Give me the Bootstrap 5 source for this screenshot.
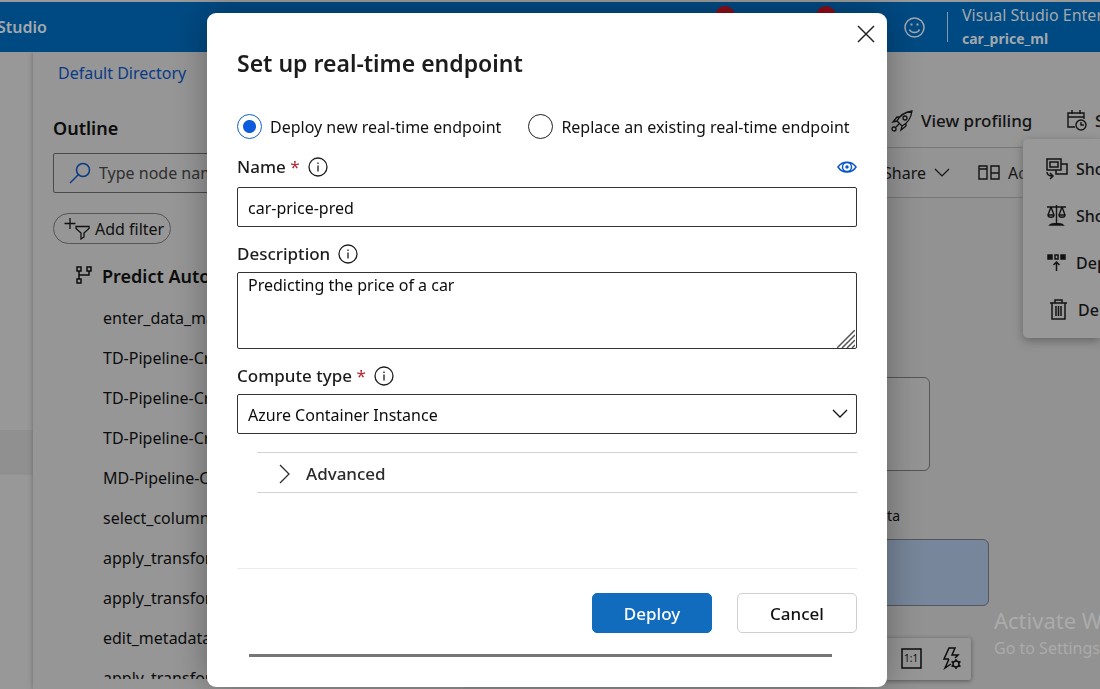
<!DOCTYPE html>
<html lang="en">
<head>
<meta charset="utf-8">
<meta name="viewport" content="width=device-width, initial-scale=1">
<title>Studio - Set up real-time endpoint</title>
<link href="https://cdn.jsdelivr.net/npm/bootstrap@5.3.0/dist/css/bootstrap.min.css" rel="stylesheet">
<style>
body{font-family:"Noto Sans","Open Sans",sans-serif;font-size:16px;line-height:24px;color:#0c0c0c;background:#929292;height:100vh;overflow:hidden}
svg{display:block;fill:none;stroke:currentColor;flex-shrink:0}
.topbar{height:52px;background:#004a83;border-top:2px solid #999;color:#a3a8ad}
.topbar .brand{font-size:16px;font-weight:600;margin-left:-3px}
.topbar .account{width:212px}
.account-box{width:152px;padding-left:14px}
.account-box>div{line-height:24px}
.account-box .space-name{font-size:14px;font-weight:700}
.vline{width:1px;height:30px;background:#7f99ae}
.dots{gap:81px;margin-right:52px}
.dot{width:20px;height:20px;background:#900d18}
.rail{width:33px;background:#989898}
.rail-top{height:378px}
.rail-mark{height:45px;background:#909090}
.outline{width:430px;background:#969696;box-shadow:0 0 5px #6a6a6a;padding:9px 20px 10px 20px}
.outline a{color:#0a3a86;margin-left:5px;font-size:16px}
.outline h2{font-size:18px;line-height:24px;font-weight:600;margin:31px 0 13px}
.search{height:40px;border:1px solid #4a4a4a;border-radius:2px;padding-left:15px}
.search input{background:transparent;color:#2f2f2f;font-size:16px;min-width:0;margin-left:6px}
.search input::placeholder{color:#2f2f2f}
.pill{height:31px;width:118px;border:1px solid #555;border-radius:16px;background:transparent;font-size:16px;color:#101010;margin-top:20px}
.tree{font-size:16px;margin:9px 0 0}
.tree li{height:40px;line-height:40px;padding-left:50px}
.tree li.root{font-size:18px;font-weight:600;padding-left:21px;height:45px}
.work{background:#929292;min-width:0}
.tools{background:#969696;border-bottom:1px solid #777;height:96px;padding-top:42px}
.tools2{background:#949494;border-bottom:1px solid #777;height:50px}
.toolbtn{background:none;border:0;padding:0;white-space:nowrap;color:#131313}
.tools .toolbtn{font-size:17px;font-weight:500}
.group1{width:209px}.group2{width:217px}
.clip-s{width:5px}
.flyout{top:139px;right:0;width:77px;height:199px;background:#989898;border-radius:5px 0 0 5px;box-shadow:0 3px 10px #666;z-index:3;padding:6px 0 0 23px}
.flyout .toolbtn{height:47px;font-weight:500}
.node{border:1px solid #55555a;border-radius:6px}
.n1{right:170px;top:179px;width:300px;height:94px;background:#949494}
.n2{right:111px;top:341px;width:300px;height:67px;background:#77869a}
.cap{right:200px;top:306px;font-size:14px}
.zoombar{right:129px;top:440px;height:42px;width:300px;background:#969696;box-shadow:0 1px 4px #555;border-radius:2px;padding-right:9px;padding-bottom:2px}
.mark-os{right:0;width:106px;bottom:29px;color:#ababab;white-space:nowrap;z-index:4}
.mark-os div:first-child{font-size:22px;line-height:32px}
.modal{padding:13px 6px 0 0;--bs-modal-margin:0}
.modal-dialog{max-width:680px;margin:0 auto}
.modal-content{height:calc(100vh - 15px);min-height:640px;border:0;border-radius:9px;padding:0 30px;box-shadow:0 0 34px rgba(0,0,0,.32);color:#111}
.modal h1{font-size:23px;line-height:32px;font-weight:600;color:#1c1c1c;margin:34px 0 0}
.close-x{right:11px;top:11px;width:20px;height:20px;background:none;border:0;padding:0;color:#222}
.choices{margin-top:34px;height:27px;gap:27px}
.choices .form-check-input{width:25px;height:25px;margin:0 8px 0 0;border-color:#222;float:none}
.choices .form-check-input:checked{border-color:#1160c8;background:#fff radial-gradient(circle,#0b5bdc 6px,#fff 7px)}
.choices label{white-space:nowrap}
.lab{height:24px;color:#1c1c1c;font-size:17px;font-weight:500;margin-top:15px}
.star{color:#b3202c;font-weight:400}
.modal .form-control,.modal .form-select{border:1px solid #333;border-radius:2px;font-size:16px;line-height:24px;padding:8px 10px 6px;color:#0c0c0c;background-image:none;height:40px}
.modal textarea.form-control{height:77px;padding-top:0;resize:none;display:block}
.fieldbox{margin-top:6px}
.grip{right:2px;bottom:1px;color:#555}
.chev{right:9px;top:13px;pointer-events:none}
.adv{margin:18px 0 0 20px;border:solid #d2d2d2;border-width:1px 0;height:41px;background:none;padding:2px 20px 0;font-size:17px;font-weight:500;color:#2b2b2b}
.adv svg{margin-right:13px}
.foot{margin-top:75px;border-top:1px solid #ebebeb;padding-top:24px;gap:25px}
.foot .btn{width:120px;height:40px;border-radius:5px;font-weight:500;font-size:17px;padding:2px 0 0}
.go{background:#116cbe;color:#fff;border-color:#116cbe}
.no{background:#fff;border-color:#cfcfcf;color:#111}
.scrollbar-x{height:3px;background:#767676;margin:21px 25px 0 12px}
</style>
</head>
<body class="d-flex flex-column">
<header class="topbar d-flex align-items-center flex-shrink-0 overflow-hidden">
  <span class="brand flex-grow-1">Studio</span>
  <div class="dots d-flex align-self-start pt-1"><span class="dot rounded-circle"></span><span class="dot rounded-circle"></span></div>
  <div class="account d-flex align-items-center flex-shrink-0 overflow-hidden h-100">
    <svg class="ms-3" width="21" height="21" viewBox="0 0 21 21" stroke-width="1.5"><circle cx="10.5" cy="10.5" r="9.500"/><path d="M5.500 12.500c1.500 4 8.500 4 10 0"/><path d="M7.500 6.500v2M13.500 6.500v2" stroke-width="2"/></svg>
    <div class="vline ms-auto"></div>
    <div class="account-box text-nowrap"><div>Visual Studio Enterprise</div><div class="space-name">car_price_ml</div></div>
  </div>
</header>
<div class="d-flex flex-grow-1 overflow-hidden">
  <nav class="rail flex-shrink-0"><div class="rail-top"></div><div class="rail-mark"></div></nav>
  <aside class="outline flex-shrink-0 d-flex flex-column">
    <div><a href="#" class="text-decoration-none">Default Directory</a></div>
    <h2>Outline</h2>
    <div class="search d-flex align-items-center flex-shrink-0">
      <svg width="22" height="22" viewBox="0 0 22 22" stroke-width="1.500" color="#0a3a86"><circle cx="14" cy="8" r="6.500"/><path d="M9.500 12.500L1 21"/></svg>
      <input class="border-0 flex-grow-1" type="text" placeholder="Type node name" aria-label="Type node name">
    </div>
    <button class="pill d-flex align-items-center ps-2 pe-0 flex-shrink-0 text-nowrap"><svg width="29" height="22" viewBox="0 0 29 22" stroke-width="1.300"><path d="M2.500 5.500h11M8 0v11M14 8.500h13v2L22 15v4l-3 2v-6l-5-4.500z"/></svg><span class="ms-1">Add filter</span></button>
    <ul class="tree list-unstyled flex-grow-1 overflow-hidden">
      <li class="root d-flex align-items-center text-nowrap"><svg class="me-2" width="20" height="20" viewBox="0 0 20 20" stroke-width="1.500"><path d="M3 1h4v4H3zM13 1h4v4h-4zM3 13h4v4H3zM5 5v8M15 5v4H5"/></svg>Predict Automobile</li>
      <li>enter_data_manually</li><li>TD-Pipeline-Created</li><li>TD-Pipeline-Created</li><li>TD-Pipeline-Created</li><li>MD-Pipeline-Created</li><li>select_columns</li><li>apply_transformation</li><li>apply_transformation</li><li>edit_metadata</li><li>apply_transformation</li>
    </ul>
  </aside>
  <main class="work flex-grow-1 d-flex flex-column">
    <div class="tools flex-shrink-0 d-flex justify-content-end">
      <div class="group1 d-flex align-items-center overflow-hidden">
        <button class="toolbtn d-flex align-items-center"><svg class="me-2" width="22" height="22" viewBox="0 0 22 22" stroke-width="1.300"><path d="M6 11C9 5 14 2 21 1c-1 7-4 12-10 15zM9 7H6l-4 5 4-1M15 13v3l-5 4 1-4M6 11l5 5"/><circle cx="14" cy="8" r="2"/><circle cx="3" cy="19" r="2"/><path d="M5 17l3-3"/></svg>View profiling</button>
        <button class="toolbtn d-flex align-items-center ms-auto"><svg class="me-2" width="20" height="21" viewBox="0 0 20 21" stroke-width="1.400"><path d="M8 17H1V3h16v6M1 7h16M5 0v4M13 0v4"/><circle cx="14" cy="15" r="5"/><path d="M14 12v3h3"/></svg><span class="clip-s overflow-hidden">Schedule</span></button>
      </div>
    </div>
    <div class="tools2 flex-shrink-0 d-flex justify-content-end">
      <div class="group2 d-flex align-items-center overflow-hidden">
        <button class="toolbtn d-flex align-items-center">Share<svg class="ms-2" width="16" height="9" viewBox="0 0 16 9" stroke-width="1.200"><path d="M1 1l7 7 7-7"/></svg></button>
        <button class="toolbtn d-flex align-items-center ms-4"><svg class="mx-1" width="22" height="15" viewBox="0 0 22 15" stroke-width="1.400"><path d="M1 1h8v13H1zM1 4h8M13 1h8v13h-8zM13 8h8"/></svg><span class="ms-1">Add</span></button>
      </div>
    </div>
    <section class="position-relative flex-grow-1 overflow-hidden">
      <div class="node n1 position-absolute"></div>
      <div class="cap position-absolute">data</div>
      <div class="node n2 position-absolute"></div>
      <div class="zoombar position-absolute d-flex justify-content-end align-items-center gap-3">
        <svg class="me-1" width="21" height="21" viewBox="0 0 21 21" stroke-width="1.500"><path d="M1 1h19v19H1z"/><text x="3" y="14" font-size="10" fill="currentColor" stroke="none">1:1</text></svg>
        <svg width="20" height="23" viewBox="0 0 20 23" stroke-width="1.500"><path d="M7 12H2L7 1h6l-3 7h6l-3 3M7 12l-4 9 6-4"/><circle cx="14" cy="17" r="3"/><path d="M14 12v2M14 20v2M9.500 14.500l2 1M16.500 18.500l2 1M9.500 19.500l2-1M16.500 15.500l2-1"/></svg>
      </div>
    </section>
  </main>
</div>
<div class="flyout position-absolute overflow-hidden">
  <button class="toolbtn d-flex align-items-center"><svg class="me-2" width="22" height="22" viewBox="0 0 22 22" stroke-width="1.500"><path d="M1 1h14v11H1zM4 4h8v5H4zM15 6h6v10H10v-4M1 14c0 3 2 4 6 4M4 15l3 3-3 3"/></svg>Show</button>
  <button class="toolbtn d-flex align-items-center"><svg class="me-2" width="22" height="22" viewBox="0 0 22 22" stroke-width="1.400"><path d="M1 2h19M10.500 0v18M4 20c2-2 11-2 13 0zM5 2L2 10M5 2l3 8M16 2l-3 8M16 2l3 8M2 10c0 3 6 3 6 0zM13 10c0 3 6 3 6 0z"/></svg>Show</button>
  <button class="toolbtn d-flex align-items-center"><svg class="me-2" width="22" height="20" viewBox="0 0 22 20" stroke-width="1.500"><path d="M2 2h4v4H2zM15 2h4v4h-4z" fill="currentColor"/><path d="M9 2h3v4H9zM10.500 18V9M7.500 12l3-3 3 3"/></svg>Deploy</button>
  <button class="toolbtn d-flex align-items-center"><svg class="me-2" width="24" height="22" viewBox="0 0 24 22" stroke-width="1.500"><path d="M4 4h17M6 4v16h13V4M9 4V1h7v3M10 7v10M12.500 7v10M15 7v10"/></svg>Delete</button>
</div>
<div class="modal d-block" tabindex="-1" role="dialog" aria-labelledby="dlg-title">
  <div class="modal-dialog">
    <form class="modal-content">
      <button type="button" class="close-x position-absolute" aria-label="Close"><svg width="20" height="20" viewBox="0 0 20 20" stroke-width="1.500"><path d="M2 2l16 16M18 2L2 18"/></svg></button>
      <h1 id="dlg-title">Set up real-time endpoint</h1>
      <div class="choices d-flex align-items-center">
        <div class="d-flex align-items-center"><input class="form-check-input" type="radio" name="mode" id="m1" checked><label for="m1">Deploy new real-time endpoint</label></div>
        <div class="d-flex align-items-center"><input class="form-check-input" type="radio" name="mode" id="m2"><label for="m2">Replace an existing real-time endpoint</label></div>
      </div>
      <div class="lab d-flex align-items-center"><label for="nm">Name <span class="star">*</span></label><svg class="ms-2" width="20" height="20" viewBox="0 0 20 20" stroke-width="1.300"><circle cx="10" cy="10" r="9"/><path d="M10 8.500v6M10 5.500v1.500"/></svg>
        <svg class="ms-auto" width="20" height="14" viewBox="0 0 20 14" stroke-width="1.500" color="#0b57c8"><path d="M1 7C5 .500 15 .500 19 7 15 13.500 5 13.500 1 7z"/><circle cx="10" cy="7" r="4.500"/><circle cx="10" cy="7" r="1" fill="currentColor"/></svg></div>
      <input class="form-control mt-2" id="nm" type="text" value="car-price-pred">
      <div class="lab d-flex align-items-center"><label for="ds">Description</label><svg class="ms-2" width="20" height="20" viewBox="0 0 20 20" stroke-width="1.300"><circle cx="10" cy="10" r="9"/><path d="M10 8.500v6M10 5.500v1.500"/></svg></div>
      <div class="fieldbox position-relative"><textarea class="form-control" id="ds">Predicting the price of a car</textarea><svg class="grip position-absolute" width="18" height="18" viewBox="0 0 18 18" stroke-width="1.500"><path d="M0 18L18 0M5 18L18 5M10 18l8-8M15 18l3-3"/></svg></div>
      <div class="lab d-flex align-items-center"><label for="ct">Compute type <span class="star">*</span></label><svg class="ms-2" width="20" height="20" viewBox="0 0 20 20" stroke-width="1.300"><circle cx="10" cy="10" r="9"/><path d="M10 8.500v6M10 5.500v1.500"/></svg></div>
      <div class="fieldbox position-relative"><select class="form-select" id="ct"><option>Azure Container Instance</option></select><svg class="chev position-absolute" width="16" height="14" viewBox="0 0 16 14" stroke-width="1.300"><path d="M1 3l7 7 7-7"/></svg></div>
      <button type="button" class="adv d-flex align-items-center"><svg width="16" height="20" viewBox="0 0 16 20" stroke-width="1.300"><path d="M3 1l9 9-9 9"/></svg>Advanced</button>
      <div class="foot d-flex justify-content-end"><button type="button" class="btn go">Deploy</button><button type="button" class="btn no">Cancel</button></div>
      <div class="scrollbar-x"></div>
    </form>
  </div>
</div>
<div class="mark-os position-absolute overflow-hidden"><div>Activate Windows</div><div>Go to Settings</div></div>
<script src="https://cdn.jsdelivr.net/npm/bootstrap@5.3.0/dist/js/bootstrap.bundle.min.js"></script>
</body>
</html>
